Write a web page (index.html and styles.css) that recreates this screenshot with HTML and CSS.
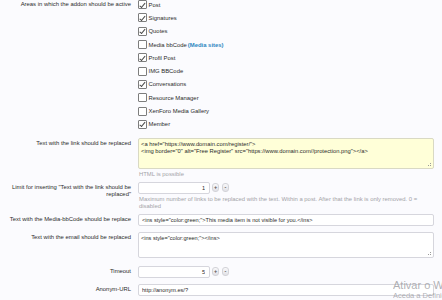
FILE: index.html
```html
<!DOCTYPE html>
<html lang="en">
<head>
    <meta charset="UTF-8">
    <meta name="viewport" content="width=device-width, initial-scale=1.0">
    <title>Addon options</title>
    <link rel="stylesheet" href="styles.css">
</head>
<body>
    <div class="form">
        <div class="row">
            <div class="row-label label-checks">Areas in which the addon should be active</div>
            <ul class="checks">
                <li><span class="box checked"></span>Post</li>
                <li><span class="box checked"></span>Signatures</li>
                <li><span class="box checked"></span>Quotes</li>
                <li><span class="box"></span>Media bbCode <a class="link" href="#">(Media sites)</a></li>
                <li><span class="box checked"></span>Profil Post</li>
                <li><span class="box"></span>IMG BBCode</li>
                <li><span class="box checked"></span>Conversations</li>
                <li><span class="box"></span>Resource Manager</li>
                <li><span class="box"></span>XenForo Media Gallery</li>
                <li><span class="box checked"></span>Member</li>
            </ul>
        </div>

        <div class="row row-link">
            <div class="row-label">Text with the link should be replaced</div>
            <div class="ctrl">
                <div class="area-wrap">
                    <textarea class="area area-yellow" spellcheck="false">&lt;a href="https://www.domain.com/register/"&gt;
&lt;img border="0" alt="Free Register" src="https://www.domain.com//protection.png"&gt;&lt;/a&gt;</textarea>
                </div>
                <div class="hint">HTML is possible</div>
            </div>
        </div>

        <div class="row row-limit">
            <div class="row-label">Limit for inserting "Text with the link should be replaced"</div>
            <div class="ctrl">
                <div class="spin">
                    <input class="input input-num" type="text" value="1">
                    <button class="spin-btn">+</button>
                    <button class="spin-btn">-</button>
                </div>
                <div class="hint hint-long">Maximum number of links to be replaced with the text. Within a post. After that the link is only removed. 0 = disabled</div>
            </div>
        </div>

        <div class="row row-media">
            <div class="row-label">Text with the Media-bbCode should be replace</div>
            <div class="ctrl">
                <input class="input" type="text" value='&lt;ins style="color:green;"&gt;This media item is not visible for you.&lt;/ins&gt;'>
            </div>
        </div>

        <div class="row row-email">
            <div class="row-label">Text with the email should be replaced</div>
            <div class="ctrl">
                <div class="area-wrap">
                    <textarea class="area area-small" spellcheck="false">&lt;ins style="color:green;"&gt;&lt;/ins&gt;</textarea>
                </div>
            </div>
        </div>

        <div class="row row-timeout">
            <div class="row-label">Timeout</div>
            <div class="ctrl">
                <div class="spin">
                    <input class="input input-num" type="text" value="5">
                    <button class="spin-btn">+</button>
                    <button class="spin-btn">-</button>
                </div>
            </div>
        </div>

        <div class="row row-anon">
            <div class="row-label">Anonym-URL</div>
            <div class="ctrl">
                <input class="input" type="text" value="http://anonym.es/?">
            </div>
        </div>
    </div>

    <div class="watermark">
        <div class="wm-title">Ativar o Windows</div>
        <div class="wm-sub">Aceda a Definições para ativar o Windows.</div>
    </div>
</body>
</html>
```

FILE: styles.css
```css
* {
    margin: 0;
    padding: 0;
    box-sizing: border-box;
}

body {
    font-family: 'Liberation Sans', Arial, sans-serif;
    font-size: 5.9px;
    color: #2b2b2b;
    background: #fbfbfe;
    width: 442px;
    height: 300px;
    overflow: hidden;
    position: relative;
}

.form {
    margin-top: -2px;
}

.row {
    display: grid;
    grid-template-columns: 131px 296px;
    column-gap: 7px;
}

.row-label {
    text-align: right;
    line-height: 7.5px;
    padding-top: 2px;
}

.label-checks {
    padding-top: 3px;
}

.ctrl {
    display: flex;
    flex-direction: column;
}

/* checkbox list */
.checks {
    list-style: none;
}

.checks li {
    height: 13.3px;
    display: flex;
    align-items: center;
}

.box {
    width: 9px;
    height: 9px;
    border: 1px solid #7d7d7d;
    border-radius: 1px;
    background: #fff;
    margin-right: 1.5px;
    position: relative;
    flex: none;
}

.box.checked::after {
    content: '';
    position: absolute;
    left: 2.2px;
    top: 0.4px;
    width: 2.4px;
    height: 4.6px;
    border-right: 1.1px solid #4a4a4a;
    border-bottom: 1.1px solid #4a4a4a;
    transform: rotate(40deg);
}

.link {
    color: #2a86c0;
    text-decoration: none;
    font-weight: bold;
    margin-left: 1px;
}

/* text inputs */
.input,
.area {
    font-family: 'Liberation Sans', Arial, sans-serif;
    font-size: 5.6px;
    color: #2b2b2b;
    background: #fff;
    border: 1px solid #d6d6dd;
    border-radius: 2px;
    outline: none;
}

.input {
    height: 12px;
    width: 296px;
    padding: 0 3px;
}

.area {
    display: block;
    width: 296px;
    resize: none;
    line-height: 7.5px;
    padding: 2px 2px;
    overflow: hidden;
}

.area-yellow {
    height: 31px;
    background: #ffffd8;
    border-color: #d9d9c4;
    font-size: 5.8px;
}

.area-small {
    height: 26px;
}

.area-wrap {
    position: relative;
}

.area-wrap::after {
    content: '';
    position: absolute;
    right: 3px;
    bottom: 3px;
    width: 1px;
    height: 1px;
    background: #9a9a9a;
    box-shadow: -2px 0 #9a9a9a, 0 -2px #9a9a9a;
}

.hint {
    color: #a3a3a8;
    line-height: 7px;
    padding-top: 2px;
    padding-left: 1px;
}

.hint-long {
    padding-top: 2px;
    width: 296px;
}

/* spinner */
.spin {
    display: flex;
    align-items: center;
    gap: 2px;
}

.input-num {
    width: 72px;
    text-align: right;
    padding-right: 4px;
}

.spin-btn {
    width: 7px;
    height: 9px;
    border: 1px solid #d3d3d8;
    border-radius: 3px;
    background: linear-gradient(#f8f8fa, #e1e1e6);
    font-family: 'Liberation Sans', Arial, sans-serif;
    font-size: 5.5px;
    font-weight: bold;
    color: #555;
    line-height: 7px;
    padding: 0;
}

.spin-btn + .spin-btn {
    margin-left: 1px;
}

/* row spacing */
.row-link {
    margin-top: 7px;
}

.row-limit {
    margin-top: 4px;
}

.row-media {
    margin-top: 4px;
}

.row-email {
    margin-top: 6px;
}

.row-timeout {
    margin-top: 8px;
}

.row-anon {
    margin-top: 6px;
}

/* windows activation watermark, clipped by the screen edge */
.watermark {
    position: absolute;
    left: 393px;
    top: 279px;
    width: 49px;
    overflow: hidden;
    white-space: nowrap;
    font-family: 'Liberation Sans', Arial, sans-serif;
    color: rgba(150, 150, 155, 0.75);
}

.wm-title {
    font-size: 11px;
    line-height: 12px;
}

.wm-sub {
    font-size: 7.5px;
    line-height: 9px;
}
```
